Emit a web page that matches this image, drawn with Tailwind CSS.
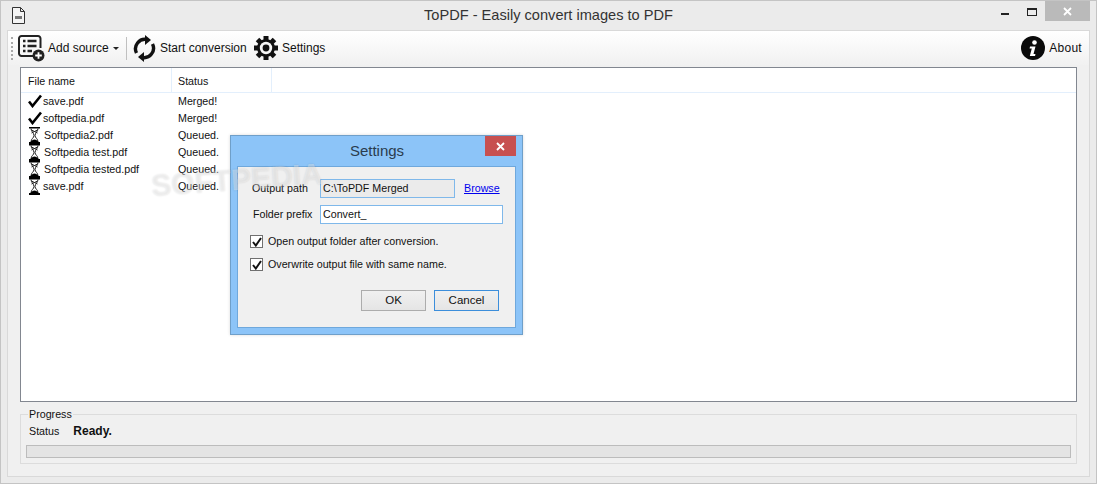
<!DOCTYPE html>
<html lang="en">
<head>
<meta charset="UTF-8">
<title>ToPDF - Easily convert images to PDF</title>
<script src="https://cdn.jsdelivr.net/npm/@tailwindcss/browser@4"></script>
</head>
<body class="m-0 overflow-hidden bg-white">
<div class="relative w-[1097px] h-[484px] overflow-hidden flex flex-col bg-[#ebebeb] border border-[#c4c4c4] font-['Liberation_Sans',sans-serif] text-[10.7px] text-[#111]">

  <!-- Title bar -->
  <div class="relative h-[29px] shrink-0 flex items-center justify-center">
    <svg class="absolute left-[11px] top-[6px]" width="13" height="17" viewBox="0 0 13 17" fill="none">
      <path d="M.5.5h8l4 4v12H.5z M8.500.5v4h4" stroke="#333" fill="#f4f4f4"/>
      <rect x="3" y="9" width="7" height="3" fill="#777"/>
    </svg>
    <span class="text-[14.6px] text-[#333]">ToPDF - Easily convert images to PDF</span>
    <div class="absolute left-[1000px] top-[12px] w-[8px] h-[2px] bg-[#222]"></div>
    <div class="absolute left-[1026px] top-[7px] w-[10px] h-[8px] border border-[#222] border-t-2"></div>
    <div class="absolute left-[1044px] top-0 w-[45px] h-[20px] bg-[#bababa] flex items-center justify-center">
      <svg width="9" height="9" viewBox="0 0 9 9"><path d="M1 1l7 7M8 1l-7 7" stroke="#fff" stroke-width="1.8"/></svg>
    </div>
  </div>

  <!-- Main panel -->
  <div class="ml-[6px] w-[1083px] h-[447px] shrink-0 flex flex-col border border-[#d9d9d9] bg-[#f0f0f0]">

    <!-- Toolbar -->
    <div class="h-[34px] shrink-0 flex items-center bg-gradient-to-b from-white to-[#f1f1f1] pl-[3px] pr-[6px] text-[12px]">
      <div class="w-[2px] h-[23px] border-l-2 border-dotted border-[#a8a8a8] mr-[6px]"></div>
      <svg class="ml-[-1px]" width="27" height="27" viewBox="0 0 27 27" fill="none">
        <path d="M17 21H3.500A2.500 2.500 0 0 1 1 18.500V3.500A2.500 2.500 0 0 1 3.500 1H20A2.500 2.500 0 0 1 22.500 3.500V13" stroke="#222" stroke-width="2"/>
        <path d="M5 6h2.500M9.500 6H18.500M5 11h2.500M9.500 11H18.500M5 16h2.500M9.500 16H14" stroke="#222" stroke-width="2.600"/>
        <circle cx="20.500" cy="20.500" r="6" fill="#222"/>
        <path d="M20.500 17.200v6.600M17.200 20.500h6.600" stroke="#fff" stroke-width="1.800"/>
      </svg>
      <span class="ml-[3px] w-[60px] whitespace-nowrap">Add source</span>
      <span class="ml-[5px] w-0 h-0 border-x-[3px] border-x-transparent border-t-[3px] border-t-[#222]"></span>
      <div class="ml-[7px] w-px h-[23px] bg-[#c0c0c0]"></div>
      <svg class="ml-[6px]" width="23" height="27" viewBox="0 0 23 27" fill="none">
        <path d="M3.500 18A9.500 9.500 0 0 1 14 4.500" stroke="#111" stroke-width="3.400"/>
        <path d="M12 0l6 5-6 5z" fill="#111"/>
        <path d="M19.500 9A9.500 9.500 0 0 1 9 22.500" stroke="#111" stroke-width="3.400"/>
        <path d="M11 27l-6-5 6-5z" fill="#111"/>
      </svg>
      <span class="ml-[4px] w-[85px] whitespace-nowrap">Start conversion</span>
      <svg class="ml-[9px]" width="24" height="24" viewBox="0 0 24 24">
        <g fill="#111">
          <circle cx="12" cy="12" r="9"/>
          <rect x="9.500" y="0" width="5" height="24"/>
          <rect x="9.500" y="0" width="5" height="24" transform="rotate(45 12 12)"/>
          <rect x="9.500" y="0" width="5" height="24" transform="rotate(90 12 12)"/>
          <rect x="9.500" y="0" width="5" height="24" transform="rotate(135 12 12)"/>
        </g>
        <circle cx="12" cy="12" r="6.200" fill="#f7f7f7"/>
        <circle cx="12" cy="12" r="3.400" fill="#111"/>
      </svg>
      <span class="ml-[4px]">Settings</span>
      <svg class="ml-auto" width="24" height="24" viewBox="0 0 24 24">
        <circle cx="12" cy="12" r="12" fill="#0a0a0a"/>
        <circle cx="13.500" cy="6.500" r="2.300" fill="#fff"/>
        <path d="M9 10.500h5.500l-2 7.500h2l-.5 2H8.800l2-7.500H8.600z" fill="#fff"/>
      </svg>
      <span class="ml-[4px] mr-px tracking-[0.3px]">About</span>
    </div>

    <!-- File list -->
    <div class="mt-[2px] ml-[12px] w-[1057px] h-[335px] shrink-0 border border-[#828790] bg-white flex flex-col">
      <div class="h-[25px] shrink-0 flex items-stretch border-b border-[#e3effc]">
        <div class="w-[151px] pl-[7px] pt-[2px] flex items-center border-r border-[#e3effc]">File name</div>
        <div class="w-[100px] pl-[6px] pt-[2px] flex items-center border-r border-[#e3effc]">Status</div>
      </div>
      <div class="flex flex-col">
        <div class="h-[17px] flex items-center">
          <span class="w-[151px] pl-[7px] flex items-center gap-[1px]">
            <svg width="14" height="14" viewBox="0 0 14 14"><path d="M1 7.500l3.500 4.500L13 1.500" fill="none" stroke="#000" stroke-width="2.600"/></svg>save.pdf</span>
          <span class="pl-[6px]">Merged!</span>
        </div>
        <div class="h-[17px] flex items-center">
          <span class="w-[151px] pl-[7px] flex items-center gap-[1px]">
            <svg width="14" height="14" viewBox="0 0 14 14"><path d="M1 7.500l3.500 4.500L13 1.500" fill="none" stroke="#000" stroke-width="2.600"/></svg>softpedia.pdf</span>
          <span class="pl-[6px]">Merged!</span>
        </div>
        <div class="h-[17px] flex items-center">
          <span class="w-[151px] pl-[7px] flex items-center gap-[2px]">
            <svg width="14" height="17" viewBox="0 0 14 17"><path d="M1 0h11v1.500H1zM1 15h11v2H1z" fill="#000"/><path d="M3 1.500c0 3 3 4.500 3 7s-3 3-3 6.500M10 1.500c0 3-3 4.500-3 7s3 3 3 6.500M3.500 3l6 3M9.500 3l-6 3" fill="none" stroke="#222"/><path d="M2.500 15c1-1.500 2.500-2.500 4-2.500s3 1 4 2.500z" fill="#000"/></svg>Softpedia2.pdf</span>
          <span class="pl-[6px]">Queued.</span>
        </div>
        <div class="h-[17px] flex items-center">
          <span class="w-[151px] pl-[7px] flex items-center gap-[2px]">
            <svg width="14" height="17" viewBox="0 0 14 17"><path d="M1 0h11v1.500H1zM1 15h11v2H1z" fill="#000"/><path d="M3 1.500c0 3 3 4.500 3 7s-3 3-3 6.500M10 1.500c0 3-3 4.500-3 7s3 3 3 6.500M3.500 3l6 3M9.500 3l-6 3" fill="none" stroke="#222"/><path d="M2.500 15c1-1.500 2.500-2.500 4-2.500s3 1 4 2.500z" fill="#000"/></svg>Softpedia test.pdf</span>
          <span class="pl-[6px]">Queued.</span>
        </div>
        <div class="h-[17px] flex items-center">
          <span class="w-[151px] pl-[7px] flex items-center gap-[2px] whitespace-nowrap">
            <svg width="14" height="17" viewBox="0 0 14 17"><path d="M1 0h11v1.500H1zM1 15h11v2H1z" fill="#000"/><path d="M3 1.500c0 3 3 4.500 3 7s-3 3-3 6.500M10 1.500c0 3-3 4.500-3 7s3 3 3 6.500M3.500 3l6 3M9.500 3l-6 3" fill="none" stroke="#222"/><path d="M2.500 15c1-1.500 2.500-2.500 4-2.500s3 1 4 2.500z" fill="#000"/></svg>Softpedia tested.pdf</span>
          <span class="pl-[6px]">Queued.</span>
        </div>
        <div class="h-[17px] flex items-center">
          <span class="w-[151px] pl-[7px] flex items-center gap-[1px]">
            <svg width="14" height="17" viewBox="0 0 14 17"><path d="M1 0h11v1.500H1zM1 15h11v2H1z" fill="#000"/><path d="M3 1.500c0 3 3 4.500 3 7s-3 3-3 6.500M10 1.500c0 3-3 4.500-3 7s3 3 3 6.500M3.500 3l6 3M9.500 3l-6 3" fill="none" stroke="#222"/><path d="M2.500 15c1-1.500 2.500-2.500 4-2.500s3 1 4 2.500z" fill="#000"/></svg>save.pdf</span>
          <span class="pl-[6px]">Queued.</span>
        </div>
      </div>
    </div>

    <!-- Progress group -->
    <div class="relative mt-[12px] ml-[12px] w-[1057px] h-[50px] shrink-0 border border-[#dcdcdc] px-[5px]">
      <span class="absolute left-[7px] top-[-7px] leading-[13px] bg-[#f0f0f0] px-px">Progress</span>
      <div class="flex items-center h-[16px] mt-[8px] pl-[3px]">
        <span>Status</span>
        <span class="ml-[14px] font-bold text-[12px]">Ready.</span>
      </div>
      <div class="mt-[6px] h-[13px] bg-[#e4e4e4] border border-[#bcbcbc]"></div>
    </div>
  </div>

  <!-- Settings dialog -->
  <div class="absolute left-[229px] top-[134px] w-[293px] h-[200px] bg-[#8cc4f8] border border-[#6f9fc9] shadow-[0_0_3px_rgba(0,0,0,0.15)] flex flex-col">
    <div class="relative h-[30px] shrink-0 flex items-center justify-center">
      <span class="text-[15px] text-[#2a3c4e] ml-[1px]">Settings</span>
      <div class="absolute right-[6px] top-0 w-[31px] h-[20px] bg-[#c75050] flex items-center justify-center">
        <svg width="9" height="9" viewBox="0 0 9 9"><path d="M1 1l7 7M8 1l-7 7" stroke="#fff" stroke-width="1.800"/></svg>
      </div>
    </div>
    <div class="relative mx-[6px] h-[162px] bg-[#f0f0f0] border border-[#6fa8dc] flex flex-col">
      <div class="mt-[12px] ml-[14px] flex items-center h-[19px]">
        <span class="w-[68px] whitespace-nowrap">Output path</span>
        <div class="w-[135px] h-[19px] bg-[#ebebeb] border border-[#7fb8ea] pl-[2px] flex items-center">C:\ToPDF Merged</div>
        <span class="ml-[9px] text-[#0000ee] underline">Browse</span>
      </div>
      <div class="mt-[7px] ml-[15px] flex items-center h-[19px]">
        <span class="w-[67px] whitespace-nowrap">Folder prefix</span>
        <div class="w-[183px] h-[19px] bg-white border border-[#7fb8ea] pl-[2px] flex items-center">Convert_</div>
      </div>
      <div class="mt-[11px] ml-[12px] flex items-center h-[13px] gap-[5px]">
        <span class="w-[13px] h-[13px] bg-white border border-[#707070] flex items-center justify-center">
          <svg width="10" height="10" viewBox="0 0 10 10"><path d="M1 5l2.800 3.500L9 1" fill="none" stroke="#111" stroke-width="2"/></svg>
        </span>
        <span>Open output folder after conversion.</span>
      </div>
      <div class="mt-[10px] ml-[12px] flex items-center h-[13px] gap-[5px]">
        <span class="w-[13px] h-[13px] bg-white border border-[#707070] flex items-center justify-center">
          <svg width="10" height="10" viewBox="0 0 10 10"><path d="M1 5l2.800 3.500L9 1" fill="none" stroke="#111" stroke-width="2"/></svg>
        </span>
        <span>Overwrite output file with same name.</span>
      </div>
      <div class="mt-[19px] mr-[16px] flex justify-end gap-[8px]">
        <div class="w-[65px] h-[21px] bg-gradient-to-b from-[#f0f0f0] to-[#e5e5e5] border border-[#acacac] flex items-center justify-center text-[11.5px]">OK</div>
        <div class="w-[65px] h-[21px] bg-gradient-to-b from-[#f0f0f0] to-[#e5e5e5] border border-[#3c8edb] flex items-center justify-center text-[11.5px]">Cancel</div>
      </div>
    </div>
  </div>

  <!-- Watermark lies over the list and the dialog -->
  <span class="absolute left-[150px] top-[164px] -rotate-[4deg] text-[30px] leading-none font-bold text-white/35 [text-shadow:0_0_2px_rgba(0,0,0,0.12)] whitespace-nowrap pointer-events-none">SOFTPEDIA</span>
</div>
</body>
</html>
